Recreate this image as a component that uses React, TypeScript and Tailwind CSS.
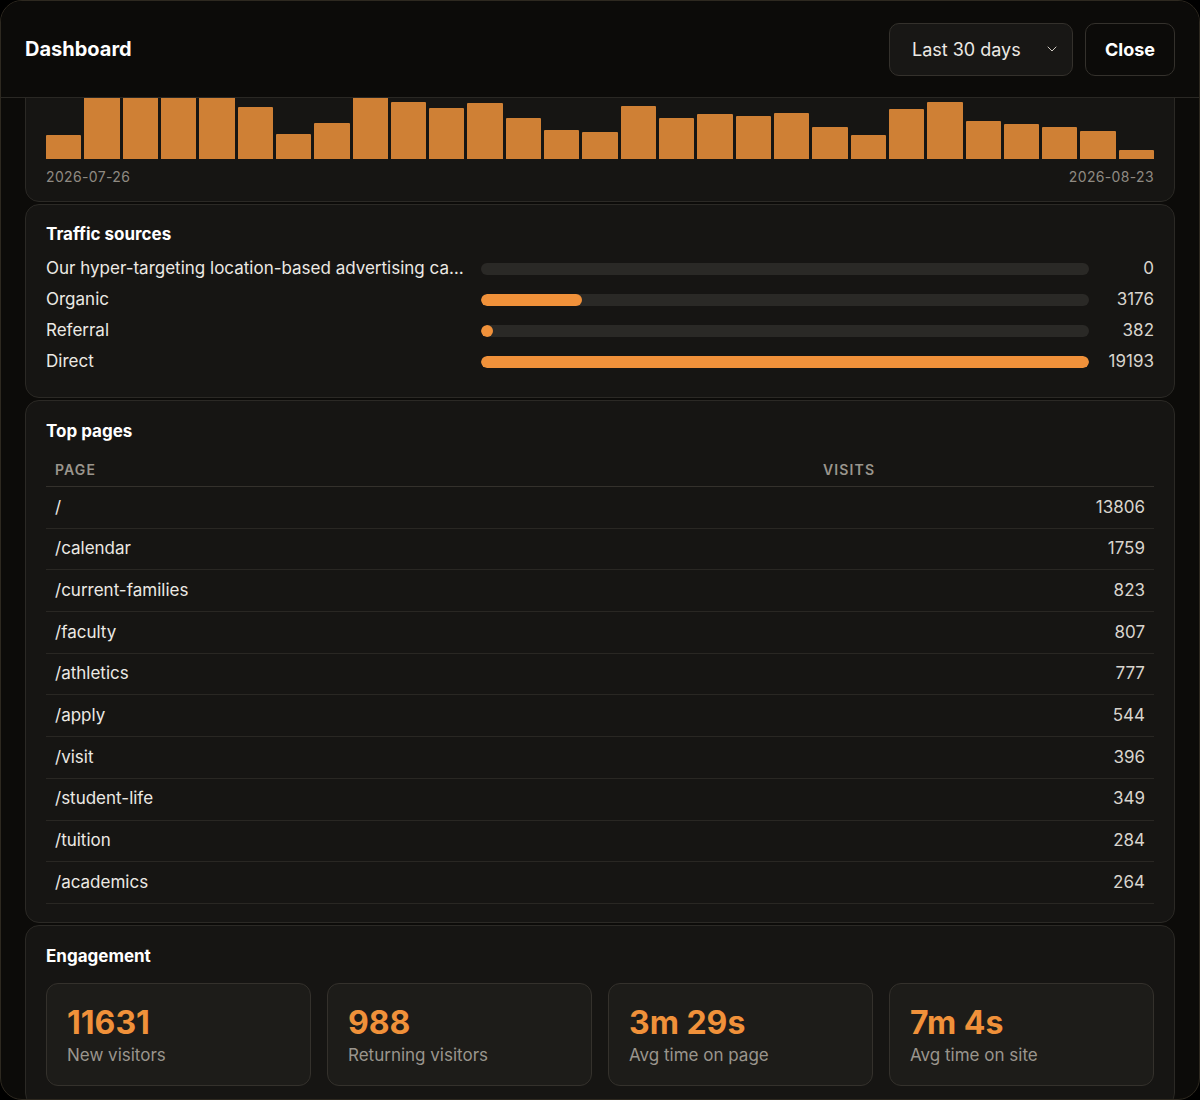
import React from 'react';
import { ChevronDown } from 'lucide-react';

const bars = [24, 80, 84, 88, 82, 52, 25, 36, 86, 57, 51, 56, 41, 29, 27, 53, 41, 45, 43, 46, 32, 24, 50, 57, 38, 35, 32, 28, 9];

const sources = [
  { name: 'Our hyper-targeting location-based advertising campaign', value: 0 },
  { name: 'Organic', value: 3176 },
  { name: 'Referral', value: 382 },
  { name: 'Direct', value: 19193 },
];

const pages = [
  ['/', 13806],
  ['/calendar', 1759],
  ['/current-families', 823],
  ['/faculty', 807],
  ['/athletics', 777],
  ['/apply', 544],
  ['/visit', 396],
  ['/student-life', 349],
  ['/tuition', 284],
  ['/academics', 264],
] as const;

const stats = [
  ['11631', 'New visitors'],
  ['988', 'Returning visitors'],
  ['3m 29s', 'Avg time on page'],
  ['7m 4s', 'Avg time on site'],
];

function Card({ children, className = '' }: { children: React.ReactNode; className?: string }) {
  return (
    <div className={`bg-[#161513] border border-[#2b2925] rounded-[14px] px-5 ${className}`}>{children}</div>
  );
}

export default function App() {
  const max = 19193;
  return (
    <div className="bg-black w-[1200px] h-[1100px] font-[Inter,sans-serif] text-[#ece9e4]">
      <div className="h-full rounded-[22px] bg-[#0c0b09] border border-[#2e2920] overflow-hidden flex flex-col">
        <div className="h-[97px] shrink-0 flex items-center justify-between px-6 border-b border-[#2a2824] relative z-10 bg-[#0c0b09]">
          <h1 className="text-[20px] leading-[24px] font-bold text-white">Dashboard</h1>
          <div className="flex items-center gap-3">
            <div className="h-[53px] w-[184px] rounded-[10px] border border-[#34312c] bg-[#181715] flex items-center justify-between pl-[22px] pr-3 text-[18px]">
              <span>Last 30 days</span>
              <ChevronDown className="w-4 h-4 text-[#cfcac2]" strokeWidth={1.5} />
            </div>
            <div className="h-[53px] px-[19px] rounded-[10px] border border-[#34312c] bg-[#0c0b09] flex items-center text-[18px] font-bold text-white">
              Close
            </div>
          </div>
        </div>
        <div className="flex-1 overflow-hidden px-6 flex flex-col gap-[2px]">
          <Card className="-mt-[40px] pt-[10px] pb-[14px]">
            <div className="h-[90px] flex items-end gap-[3px]">
              {bars.map((h, i) => (
                <div key={i} className="flex-1 bg-[#cf8035] rounded-t-[1px]" style={{ height: h }} />
              ))}
            </div>
            <div className="flex justify-between mt-2 text-[14px] leading-[20px] text-[#8f8a82] tracking-wide">
              <span>2026-07-26</span>
              <span>2026-08-23</span>
            </div>
          </Card>
          <Card className="pt-[18px] pb-[20px]">
            <h2 className="text-[17px] leading-[22px] font-bold text-white mb-[8px]">Traffic sources</h2>
            <div className="flex flex-col">
              {sources.map((s) => (
                <div key={s.name} className="h-[31px] flex items-center text-[17px]">
                  <span className="w-[418px] truncate">{s.name}</span>
                  <div className="flex-1 h-3 rounded-full bg-[#2a2926] overflow-hidden ml-[17px]">
                    <div className="h-full bg-[#f0913a] rounded-full" style={{ width: s.value === 0 ? 0 : `${Math.max((s.value / max) * 100, 2)}%` }} />
                  </div>
                  <span className="w-[65px] text-right text-[#d8d4cd]">{s.value}</span>
                </div>
              ))}
            </div>
          </Card>
          <Card className="pt-[19px] pb-[18px]">
            <h2 className="text-[17px] leading-[22px] font-bold text-white mb-[18px]">Top pages</h2>
            <table className="w-full text-[17px]">
              <thead>
                <tr className="border-b border-[#34312c] text-[14px] leading-[20px] text-[#9a958d] tracking-[0.08em]">
                  <th className="text-left font-semibold px-[9px] pb-[6px]">PAGE</th>
                  <th className="text-left font-semibold px-[9px] pb-[6px] w-[340px]">VISITS</th>
                </tr>
              </thead>
              <tbody>
                {pages.map(([p, v]) => (
                  <tr key={p} className="border-b border-[#292723] h-[41.7px]">
                    <td className="px-[9px]">{p}</td>
                    <td className="px-[9px] text-right text-[#d8d4cd]">{v}</td>
                  </tr>
                ))}
              </tbody>
            </table>
          </Card>
          <Card className="pt-[19px] pb-5">
            <h2 className="text-[17px] leading-[22px] font-bold text-white mb-[16px]">Engagement</h2>
            <div className="grid grid-cols-4 gap-4">
              {stats.map(([n, l]) => (
                <div key={l} className="h-[103px] rounded-[12px] border border-[#34312c] bg-[#1d1c19] px-5 pt-[20px]">
                  <div className="text-[32px] leading-[38px] font-bold text-[#f0913a]">{n}</div>
                  <div className="text-[17px] leading-[22px] text-[#9a958d] mt-[2px]">{l}</div>
                </div>
              ))}
            </div>
          </Card>
        </div>
      </div>
    </div>
  );
}
